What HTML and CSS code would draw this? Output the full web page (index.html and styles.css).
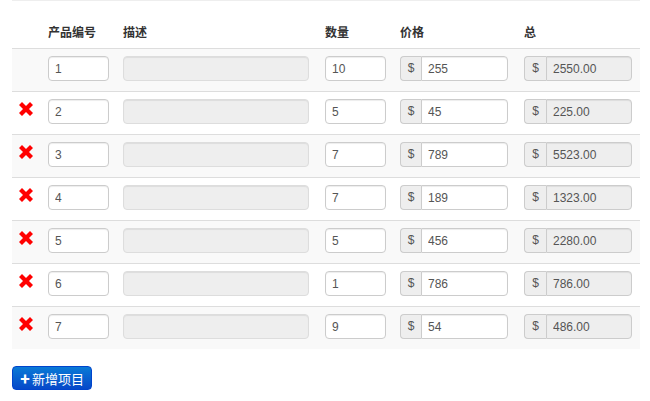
FILE: index.html
```html
<!DOCTYPE html>
<html lang="zh">
<head>
  <meta charset="UTF-8">
  <meta name="viewport" content="width=device-width, initial-scale=1.0">
  <title>发票项目</title>
  <link rel="stylesheet" href="styles.css">
</head>
<body>
  <div class="container">
    <!-- 项目列表 -->
    <table class="items">
      <colgroup>
        <col class="c-del">
        <col class="c-id">
        <col class="c-desc">
        <col class="c-qty">
        <col class="c-price">
        <col class="c-total">
      </colgroup>
      <thead>
        <tr>
          <th></th>
          <th>产品编号</th>
          <th>描述</th>
          <th>数量</th>
          <th>价格</th>
          <th>总</th>
        </tr>
      </thead>
      <tbody id="rows"></tbody>
    </table>

    <button class="btn-add" id="add"><span class="plus">✚</span>新增项目</button>
  </div>

  <script>
    // 初始数据
    const items = [
      { id: 1, qty: 10, price: 255 },
      { id: 2, qty: 5, price: 45 },
      { id: 3, qty: 7, price: 789 },
      { id: 4, qty: 7, price: 189 },
      { id: 5, qty: 5, price: 456 },
      { id: 6, qty: 1, price: 786 },
      { id: 7, qty: 9, price: 54 }
    ];
    const tbody = document.getElementById("rows");
    const xIcon = '<svg class="del" viewBox="0 0 14 14" width="14" height="14"><path d="M0 3 L3 0 L7 4 L11 0 L14 3 L10 7 L14 11 L11 14 L7 10 L3 14 L0 11 L4 7 Z" fill="#f00"/></svg>';

    function render() {
      tbody.innerHTML = "";
      items.forEach((item, i) => {
        const tr = document.createElement("tr");
        tr.innerHTML =
          '<td>' + (i === 0 ? '' : xIcon) + '</td>' +
          '<td><input class="field f-id" value="' + item.id + '"></td>' +
          '<td><input class="field f-desc" disabled></td>' +
          '<td><input class="field f-qty" value="' + item.qty + '"></td>' +
          '<td><div class="prepend"><span class="addon">$</span><input class="field f-price" value="' + item.price + '"></div></td>' +
          '<td><div class="prepend"><span class="addon">$</span><input class="field f-total" readonly value="' + (item.qty * item.price).toFixed(2) + '"></div></td>';
        const del = tr.querySelector(".del");
        if (del) del.addEventListener("click", () => { items.splice(i, 1); render(); });
        tbody.appendChild(tr);
      });
    }
    render();

    document.getElementById("add").addEventListener("click", function() {
      items.push({ id: items.length + 1, qty: 1, price: 0 });
      render();
    });
  </script>
</body>
</html>
```

FILE: styles.css
```css
html, body {
  margin: 0;
  padding: 0;
  background: #fff;
  font-family: "Liberation Sans", Arial, "Noto Sans CJK SC", sans-serif;
  font-size: 12px;
  color: #333;
}
.container {
  padding: 0 10px 0 12px;
}
.items {
  width: 628px;
  table-layout: fixed;
  border-collapse: collapse;
  border-top: 1px solid #eee;
  margin-bottom: 17px;
}
.c-del { width: 28px; }
.c-id { width: 75px; }
.c-desc { width: 202px; }
.c-qty { width: 75px; }
.c-price { width: 124px; }
.c-total { width: 124px; }
.items th {
  height: 20px;
  padding: 21px 8px 6px;
  text-align: left;
  font-family: "Noto Sans CJK SC", sans-serif;
  font-size: 12px;
  line-height: 20px;
  font-weight: bold;
  color: #333;
}
.items td {
  padding: 7px 8px 10px;
  border-top: 1px solid #ddd;
  vertical-align: top;
  line-height: 25px;
}
.items tbody tr:nth-child(odd) td {
  background: #f9f9f9;
}
.del {
  display: block;
  margin: 3px 0 0 -1px;
  cursor: pointer;
}
.field {
  box-sizing: border-box;
  display: block;
  height: 25px;
  margin: 0;
  padding: 0 6px;
  border: 1px solid #ccc;
  border-radius: 4px;
  background: #fff;
  font-family: "Liberation Sans", Arial, sans-serif;
  font-size: 12px;
  color: #555;
  box-shadow: inset 0 1px 1px rgba(0, 0, 0, 0.075);
}
.f-id { width: 61px; }
.f-desc {
  width: 186px;
  background: #eee;
  border-color: #ddd;
}
.f-qty { width: 61px; }
.prepend {
  display: flex;
}
.addon {
  box-sizing: border-box;
  width: 22px;
  height: 25px;
  line-height: 23px;
  text-align: center;
  background: #eee;
  border: 1px solid #ccc;
  border-right: none;
  border-radius: 4px 0 0 4px;
  color: #555;
}
.prepend .field {
  border-radius: 0 4px 4px 0;
}
.f-price { width: 87px; }
.f-total {
  width: 86px;
  background: #eee;
}
.btn-add {
  display: flex;
  align-items: center;
  justify-content: center;
  width: 80px;
  height: 24px;
  padding: 0;
  border: 1px solid #04c;
  border-radius: 4px;
  background: linear-gradient(#0a7ad6, #0648c9);
  color: #fff;
  font-family: "Noto Sans CJK SC", sans-serif;
  font-size: 13px;
  cursor: pointer;
}
.plus {
  font-size: 10px;
  margin-right: 2px;
}
```
